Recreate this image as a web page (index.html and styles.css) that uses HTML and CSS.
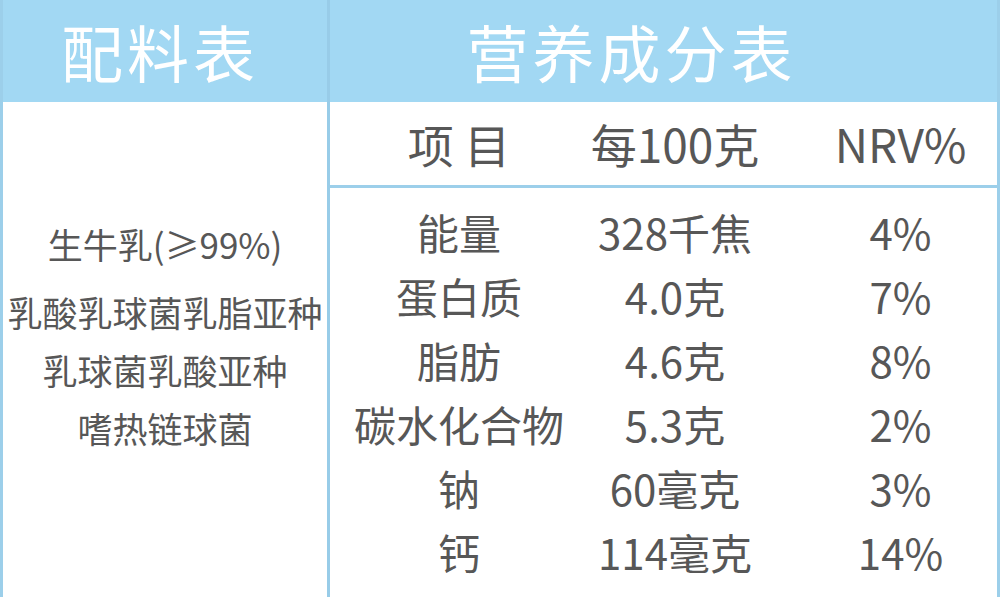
FILE: index.html
```html
<!DOCTYPE html>
<html lang="zh-CN">
<head>
<meta charset="utf-8">
<title>配料表 营养成分表</title>
<link rel="stylesheet" href="styles.css">
</head>
<body>
<div class="table">
  <section class="col col-left">
    <div class="head head-left">配料表</div>
    <div class="ingredients">
      <div class="line line-first">生牛乳(≥99%)</div>
      <div class="line">乳酸乳球菌乳脂亚种</div>
      <div class="line">乳球菌乳酸亚种</div>
      <div class="line">嗜热链球菌</div>
    </div>
  </section>
  <section class="col col-right">
    <div class="head head-right">营养成分表</div>
    <div class="grid subhead">
      <div class="cell">项 目</div>
      <div class="cell">每100克</div>
      <div class="cell c3">NRV%</div>
    </div>
    <div class="rows">
      <div class="grid row"><div class="cell">能量</div><div class="cell">328千焦</div><div class="cell c3">4%</div></div>
      <div class="grid row"><div class="cell">蛋白质</div><div class="cell">4.0克</div><div class="cell c3">7%</div></div>
      <div class="grid row"><div class="cell">脂肪</div><div class="cell">4.6克</div><div class="cell c3">8%</div></div>
      <div class="grid row"><div class="cell">碳水化合物</div><div class="cell">5.3克</div><div class="cell c3">2%</div></div>
      <div class="grid row"><div class="cell">钠</div><div class="cell">60毫克</div><div class="cell c3">3%</div></div>
      <div class="grid row"><div class="cell">钙</div><div class="cell">114毫克</div><div class="cell c3">14%</div></div>
    </div>
  </section>
</div>
</body>
</html>
```
FILE: styles.css
```css
html, body {
  margin: 0;
  padding: 0;
  background: #ffffff;
}
body {
  width: 1000px;
  height: 597px;
  overflow: hidden;
  font-family: "Noto Sans CJK SC", "Noto Sans", sans-serif;
  color: #575757;
}
.table {
  display: flex;
  width: 1000px;
  height: 597px;
  box-sizing: border-box;
  border-left: 3px solid #9ccfea;
  border-right: 3px solid #9ccfea;
}
.col {
  display: flex;
  flex-direction: column;
}
.col-left {
  width: 324px;
  flex: none;
}
.col-right {
  flex: 1;
  border-left: 3px solid #98cce8;
}
.head {
  height: 102px;
  flex: none;
  background: #a2d8f3;
  color: #ffffff;
  font-size: 62px;
  letter-spacing: 4px;
  line-height: 102px;
  text-align: center;
  white-space: nowrap;
}
.head-left {
  padding-right: 10px;
}
.head-right {
  padding-right: 64px;
}
.ingredients {
  padding-top: 113px;
  font-size: 35px;
  line-height: 58px;
  text-align: center;
  white-space: nowrap;
}
.line-first {
  margin-bottom: 10px;
}
.grid {
  display: grid;
  grid-template-columns: 258px 174px 1fr;
  text-align: center;
  white-space: nowrap;
}
.c3 {
  padding-left: 42px;
}
.subhead {
  height: 83px;
  flex: none;
  line-height: 83px;
  font-size: 46px;
  border-bottom: 3px solid #9ccfea;
}
.rows {
  padding-top: 12px;
}
.row {
  height: 64px;
  line-height: 64px;
  font-size: 42px;
}
```
